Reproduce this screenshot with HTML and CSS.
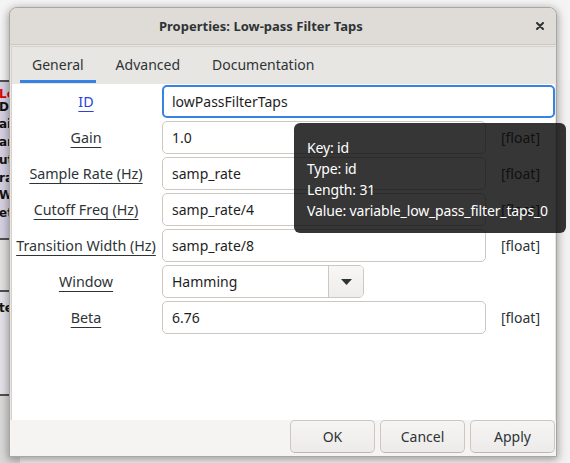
FILE: index.html
```html
<!DOCTYPE html>
<html>
<head>
<meta charset="utf-8">
<link rel="stylesheet" href="styles.css">
</head>
<body>
<div class="desk">
  <div class="bg-top"></div>
  <div class="hline l1"></div>
  <div class="blk blk-a">
    <span class="frag red f0">Lo</span>
    <span class="frag f1">D:</span>
    <span class="frag f2">ai</span>
    <span class="frag f3">an</span>
    <span class="frag f4">ut</span>
    <span class="frag f5">ra</span>
    <span class="frag f6">Wi</span>
    <span class="frag f7">et</span>
  </div>
  <div class="hline l2"></div>
  <div class="blk blk-b"></div>
  <div class="hline l3"></div>
  <div class="blk blk-c"><span class="frag fc">te</span></div>
  <div class="hline l4"></div>
  <div class="blk blk-d"></div>
</div>

<div class="window">
  <div class="titlebar">
    <span class="title">Properties: Low-pass Filter Taps</span>
    <svg class="close" width="8" height="8" viewBox="0 0 8 8"><path d="M1 1L7 7M7 1L1 7" stroke="#2e3436" stroke-width="2" stroke-linecap="round"/></svg>
  </div>
  <div class="notebook">
    <div class="tabs">
      <div class="tab active">General</div>
      <div class="tab">Advanced</div>
      <div class="tab">Documentation</div>
    </div>
    <div class="page">
      <div class="form">
        <span class="lbl link">ID</span>
        <div class="field focus wide">lowPassFilterTaps</div>

        <span class="lbl">Gain</span>
        <div class="field">1.0</div>
        <span class="type">[float]</span>

        <span class="lbl">Sample Rate (Hz)</span>
        <div class="field">samp_rate</div>
        <span class="type">[float]</span>

        <span class="lbl">Cutoff Freq (Hz)</span>
        <div class="field">samp_rate/4</div>
        <span class="type">[float]</span>

        <span class="lbl">Transition Width (Hz)</span>
        <div class="field">samp_rate/8</div>
        <span class="type">[float]</span>

        <span class="lbl">Window</span>
        <div class="combo">
          <span class="combo-text">Hamming</span>
          <span class="combo-btn"><svg width="11" height="6" viewBox="0 0 11 6"><path d="M0 0H11L5.5 6Z" fill="#2e3436"/></svg></span>
        </div>
        <span class="type"></span>

        <span class="lbl">Beta</span>
        <div class="field">6.76</div>
        <span class="type">[float]</span>
      </div>
    </div>
  </div>
  <div class="actions">
    <button class="btn">OK</button>
    <button class="btn">Cancel</button>
    <button class="btn">Apply</button>
  </div>
</div>

<div class="tooltip">
  <div>Key: id</div>
  <div>Type: id</div>
  <div>Length: 31</div>
  <div>Value: variable_low_pass_filter_taps_0</div>
</div>
</body>
</html>
```
FILE: styles.css
```css
* { box-sizing: border-box; }
html, body {
  margin: 0;
  width: 570px;
  height: 463px;
  overflow: hidden;
}
body {
  position: relative;
  background: #f2f2f2;
  font-family: "Noto Sans", sans-serif;
  font-size: 14px;
  color: #2e3436;
}

/* desktop behind the dialog */
.desk { position: absolute; inset: 0; }
.bg-top { position: absolute; left: 0; top: 0; width: 570px; height: 80px; background: #f4f4f4; }
.hline { position: absolute; left: 0; width: 20px; height: 2px; background: #505050; }
.l1 { top: 80px; }
.l2 { top: 238px; }
.l3 { top: 290px; }
.l4 { top: 394px; }
.blk { position: absolute; left: 0; width: 20px; overflow: hidden; }
.blk-a { top: 82px; height: 156px; background: #d5d1e3; }
.blk-b { top: 240px; height: 50px; background: #e1e1e1; }
.blk-c { top: 292px; height: 102px; background: #e3e2e8; }
.blk-d { top: 396px; height: 67px; background: #d9d9d9; }
.frag {
  position: absolute;
  left: -1px;
  font-family: "DejaVu Sans", sans-serif;
  font-weight: bold;
  font-size: 12px;
  line-height: 11px;
  color: #111;
}
.red { color: #e00000; }
.f0 { top: 7px; }
.f1 { top: 20px; }
.f2 { top: 37px; }
.f3 { top: 55px; }
.f4 { top: 73px; }
.f5 { top: 91px; }
.f6 { top: 108px; }
.f7 { top: 126px; }
.fc { top: 11px; }

/* dialog window */
.window {
  position: absolute;
  left: 9px;
  top: 7px;
  width: 548px;
  height: 450px;
  border: 1px solid #aaa6a2;
  border-radius: 8px 8px 0 0;
  background: #e8e6e3;
  box-shadow: 0 2px 8px 1px rgba(0, 0, 0, 0.35);
  display: flex;
  flex-direction: column;
  overflow: hidden;
}
.titlebar {
  height: 37px;
  flex: none;
  background: #dfdcd8;
  border-bottom: 1px solid #ccc8c4;
  display: flex;
  align-items: center;
  padding-left: 149px;
  padding-right: 12px;
}
.title {
  font-weight: bold;
  font-size: 13px;
  color: #2e3436;
}
.close { margin-left: auto; }

.notebook {
  flex: 1;
  display: flex;
  flex-direction: column;
  margin: 1px 1px 0;
  border: 1px solid #d6d1cc;
  border-bottom: none;
  border-right: none;
}
.tabs {
  height: 37px;
  flex: none;
  display: flex;
  gap: 8px;
  padding-left: 8px;
  background: #e8e6e3;
}
.tab {
  padding: 2px 12px 0;
  display: flex;
  align-items: center;
  border-bottom: 3px solid transparent;
  margin-bottom: 1px;
  color: #2e3436;
}
.tab.active { border-bottom-color: #3584e4; }

.page {
  flex: 1;
  background: #ffffff;
  padding-top: 1px;
}
.form {
  display: grid;
  grid-template-columns: 150px 324px 1fr;
  grid-auto-rows: 33px;
  row-gap: 3px;
  align-items: center;
}
.lbl {
  justify-self: center;
  margin-right: 2px;
  text-decoration: underline;
  text-underline-offset: 4px;
  text-decoration-thickness: 1px;
  color: #2e3436;
  white-space: nowrap;
  font-size: 14.3px;
}
.lbl.link { color: #2a40e0; }
.field {
  height: 33px;
  border: 1px solid #cdc7c2;
  border-radius: 5px;
  background: #fff;
  padding: 0 9px;
  display: flex;
  align-items: center;
  color: #1e1e1e;
}
.field.focus {
  border: 2px solid #3584e4;
  padding: 0 8px;
}
.field.wide { grid-column: 2 / 4; }
.type { justify-self: center; color: #2e3436; }

.combo {
  width: 202px;
  height: 33px;
  border: 1px solid #cdc7c2;
  border-radius: 5px;
  display: flex;
  overflow: hidden;
  background: #fff;
}
.combo-text {
  flex: 1;
  display: flex;
  align-items: center;
  padding-left: 9px;
  color: #1e1e1e;
}
.combo-btn {
  width: 35px;
  border-left: 1px solid #cdc7c2;
  background: linear-gradient(#f8f7f6, #efedeb);
  display: flex;
  align-items: center;
  justify-content: center;
}

.actions {
  height: 36px;
  flex: none;
  background: #f5f4f2;
  display: flex;
  justify-content: flex-end;
  align-items: flex-start;
  gap: 5px;
  padding-right: 1px;
}
.btn {
  width: 85px;
  height: 33px;
  border: 1px solid #cdc7c2;
  border-bottom-color: #bfb8b1;
  border-radius: 5px;
  background: linear-gradient(#f6f5f4, #edebe9);
  font-family: "Noto Sans", sans-serif;
  font-size: 14px;
  color: #2e3436;
  padding: 0;
}

.tooltip {
  position: absolute;
  left: 294px;
  top: 123px;
  width: 272px;
  height: 110px;
  border-radius: 6px;
  background: rgba(10, 10, 10, 0.82);
  color: #ffffff;
  padding: 14px 13px;
  line-height: 21px;
  font-size: 14px;
  white-space: nowrap;
  letter-spacing: -0.15px;
}
```
